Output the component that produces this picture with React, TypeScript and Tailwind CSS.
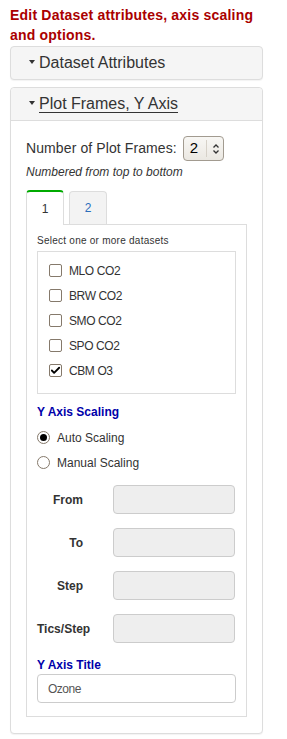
import { Check } from "lucide-react";

const datasets = [
  { name: "MLO CO2", checked: false },
  { name: "BRW CO2", checked: false },
  { name: "SMO CO2", checked: false },
  { name: "SPO CO2", checked: false },
  { name: "CBM O3", checked: true },
];

const scaleRows = ["From", "To", "Step", "Tics/Step"];

const Caret = () => (
  <span className="inline-block w-0 h-0 border-l-[3px] border-r-[3px] border-t-[4px] border-l-transparent border-r-transparent border-t-[#333] mr-[4px] mb-[3px]"></span>
);

const CheckBox = ({ checked }: { checked: boolean }) => (
  <span className="w-[13px] h-[13px] border border-[#85796b] rounded-[2px] bg-white flex items-center justify-center shrink-0">
    {checked && <Check className="w-[11px] h-[11px] text-black" strokeWidth={4} />}
  </span>
);

const Radio = ({ checked }: { checked: boolean }) => (
  <span className="w-[13px] h-[13px] border border-[#85796b] rounded-full bg-white flex items-center justify-center shrink-0">
    {checked && <span className="w-[7px] h-[7px] rounded-full bg-black"></span>}
  </span>
);

const App = () => {
  return (
    <div className="w-[287px] min-h-[739px] bg-white px-[10px] pt-[5px] font-['Liberation_Sans',Arial,sans-serif] text-[#333]">
      <h1 className="text-[14px] leading-[20px] font-bold text-[#aa0000] tracking-[0.2px] mb-[1px]">
        Edit Dataset attributes, axis scaling and options.
      </h1>

      <div className="w-[253px] border border-[#ddd] rounded-[4px] bg-[#f5f5f5] shadow-[0_1px_1px_rgba(0,0,0,0.05)] h-[34px] flex items-center pl-[18px]">
        <Caret />
        <span className="text-[16px] leading-[18px]">Dataset Attributes</span>
      </div>

      <div className="w-[253px] mt-[7px] border border-[#ddd] rounded-[4px] bg-white shadow-[0_1px_1px_rgba(0,0,0,0.05)]">
        <div className="h-[33px] bg-[#f5f5f5] border-b border-[#ddd] rounded-t-[4px] flex items-center pl-[18px]">
          <Caret />
          <span className="text-[16px] leading-[18px] underline underline-offset-[3px]">Plot Frames, Y Axis</span>
        </div>

        <div className="px-[15px] pt-[15px] pb-[16px]">
          <div className="flex items-center h-[25px]">
            <span className="text-[14px] tracking-[0.1px] mr-[6px]">Number of Plot Frames:</span>
            <div className="w-[41px] h-[25px] border border-[#a29b90] rounded-[4px] bg-gradient-to-b from-[#f8f7f4] to-[#ebe8e2] flex items-center">
              <span className="text-[15px] text-black pl-[6px] w-[22px]">2</span>
              <span className="h-[17px] border-l border-[#d6d1c8]"></span>
              <svg width="10" height="12" viewBox="0 0 10 12" className="ml-[4px]">
                <path d="M2.5 4.5 L5 2 L7.5 4.5 M2.5 7.5 L5 10 L7.5 7.5" fill="none" stroke="#333" strokeWidth="1.3" />
              </svg>
            </div>
          </div>
          <p className="italic text-[12px] leading-[14px] mt-[4px]">Numbered from top to bottom</p>

          <div className="flex items-end mt-[10px] h-[35px]">
            <div className="w-[38px] h-[35px] border-t-2 border-t-[#00aa00] border-x border-x-[#ddd] rounded-t-[4px] bg-white flex items-center justify-center text-[12px] text-[#333] -mb-px relative z-10">
              1
            </div>
            <div className="w-[38px] h-[33px] ml-[5px] border border-[#ddd] border-b-0 rounded-t-[4px] bg-[#f3f3f3] flex items-center justify-center text-[12px] text-[#2a6ebb]">
              2
            </div>
          </div>

          <div className="border border-[#ddd] px-[10px] pt-[10px] pb-[13px]">
            <p className="text-[10px] leading-[12px] tracking-[0.25px]">Select one or more datasets</p>
            <div className="border border-[#ddd] mt-[4px] pt-[6px] pb-[10px] pl-[11px]">
              {datasets.map((d) => (
                <label key={d.name} className="flex items-center h-[25px]">
                  <CheckBox checked={d.checked} />
                  <span className="ml-[7px] text-[12px] tracking-[-0.4px] text-[#333]">{d.name}</span>
                </label>
              ))}
            </div>

            <h3 className="text-[12px] font-bold text-[#0000aa] leading-[14px] mt-[11px]">Y Axis Scaling</h3>
            <div className="mt-[6px]">
              <label className="flex items-center h-[25px]">
                <Radio checked={true} />
                <span className="ml-[7px] text-[12px]">Auto Scaling</span>
              </label>
              <label className="flex items-center h-[25px]">
                <Radio checked={false} />
                <span className="ml-[7px] text-[12px]">Manual Scaling</span>
              </label>
            </div>

            <div className="mt-[10px] flex flex-col gap-[14px]">
              {scaleRows.map((r) => (
                <div key={r} className="flex items-center">
                  <span className="w-[46px] text-right text-[12px] font-bold whitespace-nowrap">{r}</span>
                  <div className="ml-[30px] w-[122px] h-[29px] border border-[#ccc] rounded-[4px] bg-[#eee]"></div>
                </div>
              ))}
            </div>

            <h3 className="text-[12px] font-bold text-[#0000aa] leading-[14px] mt-[15px]">Y Axis Title</h3>
            <div className="mt-[2px] h-[29px] border border-[#ccc] rounded-[4px] bg-white flex items-center pl-[10px] text-[12px] text-[#555] tracking-[-0.5px]">
              Ozone
            </div>
          </div>
        </div>
      </div>
    </div>
  );
};

export default App;
